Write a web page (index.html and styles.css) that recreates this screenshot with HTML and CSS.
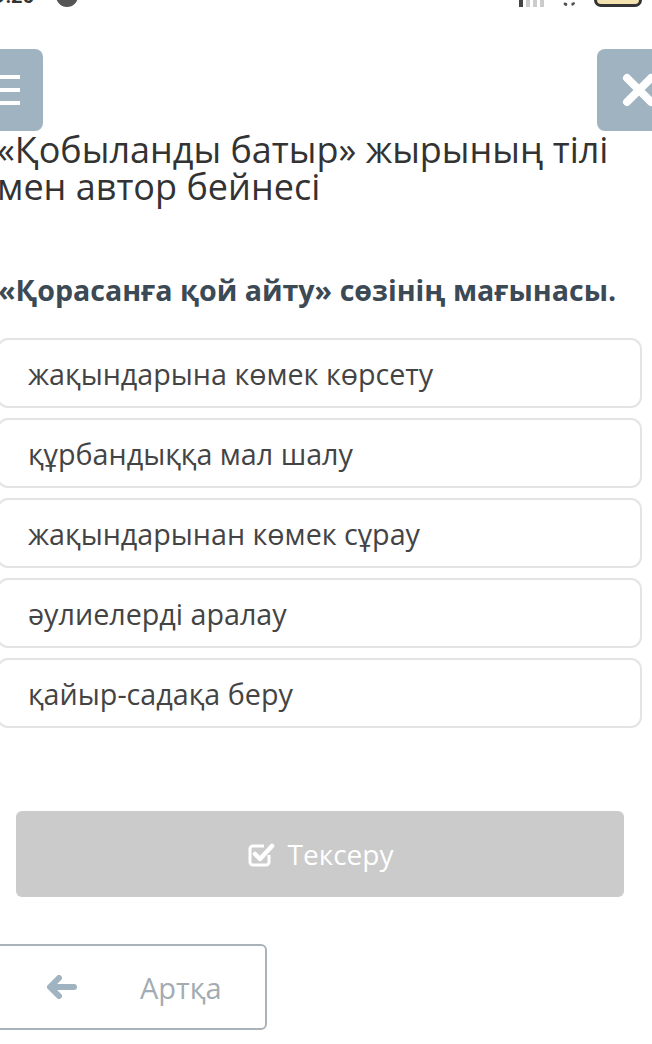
FILE: index.html
```html
<!DOCTYPE html>
<html lang="kk">

<head>
  <meta charset="UTF-8">
  <meta name="viewport" content="width=device-width, initial-scale=1.0">
  <title>Тест</title>
  <link rel="stylesheet" href="styles.css">
</head>

<body>
  <!-- status bar (cut off at the top) -->
  <div class="status-bar">
    <div class="status-inner">
      <span class="status-time">9:26</span>
      <span class="status-dot"></span>
      <span class="status-right">
        <span class="signal"><i></i><i></i><i></i><i></i></span>
        <span class="wifi"></span>
        <span class="battery"></span>
      </span>
    </div>
  </div>

  <!-- top buttons -->
  <header class="topbar">
    <button class="icon-btn menu-btn" aria-label="Мәзір">
      <span></span><span></span><span></span>
    </button>
    <button class="icon-btn close-btn" aria-label="Жабу">
      <svg width="40" height="40" viewBox="0 0 40 40">
        <path d="M8 8 L32 32 M32 8 L8 32" stroke="#fff" stroke-width="8" stroke-linecap="round" />
      </svg>
    </button>
  </header>

  <h1 class="lesson-title">«Қобыланды батыр» жырының тілі мен автор бейнесі</h1>

  <h2 class="question">«Қорасанға қой айту» сөзінің мағынасы.</h2>

  <ul class="answers">
    <li>жақындарына көмек көрсету</li>
    <li>құрбандыққа мал шалу</li>
    <li>жақындарынан көмек сұрау</li>
    <li>әулиелерді аралау</li>
    <li>қайыр-садақа беру</li>
  </ul>

  <button class="check-btn">
    <svg width="28" height="28" viewBox="0 0 28 28">
      <path d="M22 15 V22 a3 3 0 0 1 -3 3 H6 a3 3 0 0 1 -3 -3 V9 a3 3 0 0 1 3 -3 H17" fill="none" stroke="#fff" stroke-width="3" />
      <path d="M8 14 L13 19 L25 6" fill="none" stroke="#fff" stroke-width="4.5" stroke-linecap="round" stroke-linejoin="round" />
    </svg>
    <span>Тексеру</span>
  </button>

  <button class="back-btn">
    <svg width="30" height="24" viewBox="0 0 30 24">
      <path d="M12 3 L3 12 L12 21 M4 12 H27" fill="none" stroke="#9fb3c1" stroke-width="6" stroke-linecap="round" stroke-linejoin="round" />
    </svg>
    <span>Артқа</span>
  </button>
</body>

</html>
```

FILE: styles.css
```css
/* base */
body {
  margin: 0;
  padding: 0;
  background-color: #fff;
  font-family: "Open Sans", "Noto Sans", sans-serif;
  color: #333;
  overflow: hidden;
}

button {
  font-family: inherit;
  cursor: pointer;
}

/* status bar */
.status-bar {
  height: 7px;
  overflow: hidden;
}

.status-inner {
  display: flex;
  align-items: flex-end;
  height: 22px;
  margin-top: -15px;
  padding: 0 12px 0 0;
}

.status-time {
  font-family: "Roboto", sans-serif;
  font-weight: bold;
  font-size: 20px;
  line-height: 22px;
  color: #333;
  margin-left: -6px;
}

.status-dot {
  width: 22px;
  height: 22px;
  border-radius: 50%;
  background-color: #555;
  margin-left: 22px;
}

.status-right {
  margin-left: auto;
  display: flex;
  align-items: flex-end;
  gap: 18px;
}

.signal {
  display: flex;
  align-items: flex-end;
  gap: 3px;
}

.signal i {
  display: block;
  width: 4px;
  height: 16px;
  background-color: #ccc;
}

.signal i:first-child {
  background-color: #444;
}

.wifi {
  width: 14px;
  height: 10px;
  border-radius: 50%;
  border-bottom: 4px dotted #555;
}

.battery {
  width: 42px;
  height: 20px;
  border: 3px solid #333;
  border-radius: 7px;
  background-color: #f3e2b0;
  margin-right: -2px;
}

/* top buttons */
.topbar {
  display: flex;
  justify-content: space-between;
  margin-top: 42px;
}

.icon-btn {
  width: 82px;
  height: 82px;
  border: none;
  border-radius: 8px;
  background-color: #9fb3c1;
  padding: 0;
  display: flex;
}

.menu-btn {
  margin-left: -39px;
  flex-direction: column;
  justify-content: center;
  align-items: flex-end;
  gap: 9px;
  padding-right: 23px;
}

.menu-btn span {
  display: block;
  width: 36px;
  height: 4px;
  background-color: #fff;
}

.close-btn {
  margin-right: -27px;
  align-items: center;
  justify-content: flex-start;
  padding-left: 22px;
}

/* headings */
.lesson-title {
  margin: 0 8px 0 -3px;
  font-size: 36px;
  font-weight: normal;
  line-height: 37px;
  color: #333;
}

.question {
  margin: 68px 0 0 -2px;
  font-size: 28.6px;
  font-weight: bold;
  line-height: 34px;
  color: #3b4a55;
}

/* answers */
.answers {
  list-style-type: none;
  margin: 31px 10px 0 -3px;
  padding: 0;
  display: flex;
  flex-direction: column;
  gap: 10px;
}

.answers li {
  height: 66px;
  border: 2px solid #e4e4e4;
  border-radius: 11px;
  padding-left: 29px;
  display: flex;
  align-items: center;
  font-size: 28.7px;
  color: #444;
}

/* check button */
.check-btn {
  display: flex;
  align-items: center;
  justify-content: center;
  gap: 13px;
  width: 608px;
  height: 86px;
  margin: 83px 0 0 16px;
  border: none;
  border-radius: 6px;
  background-color: #cbcbcb;
  color: #fff;
  font-size: 28px;
  padding: 0;
}

/* back button */
.back-btn {
  display: flex;
  align-items: center;
  width: 274px;
  height: 86px;
  margin: 47px 0 0 -7px;
  border: 2px solid #a9b3b9;
  border-radius: 6px;
  background-color: #fff;
  color: #a3acb2;
  font-size: 29px;
  padding: 0 0 0 52px;
  gap: 63px;
}
```
